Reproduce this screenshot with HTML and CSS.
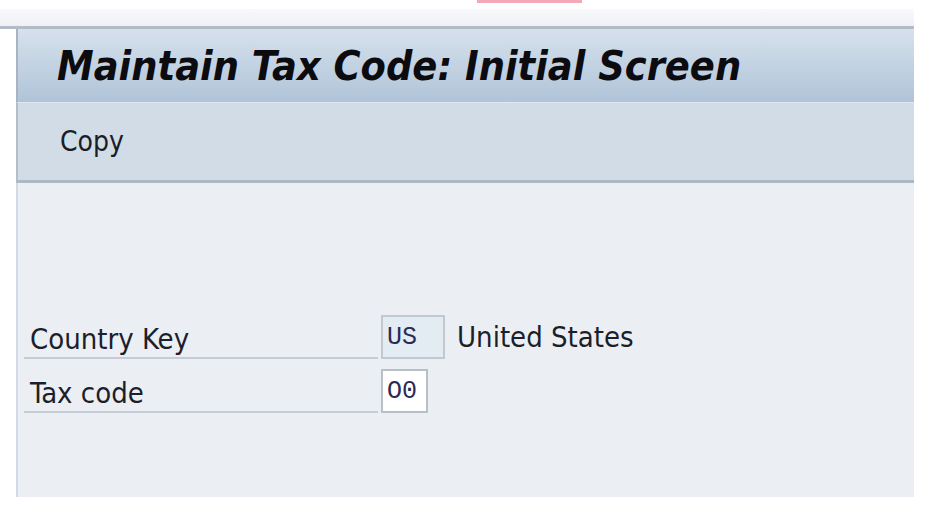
FILE: index.html
```html
<!DOCTYPE html>
<html>
<head>
<meta charset="utf-8">
<link rel="stylesheet" href="styles.css">
</head>
<body>
<div class="mark"></div>
<div class="strip"></div>
<div class="panel">
  <div class="titlebar"><h1 class="title">Maintain Tax Code: Initial Screen</h1></div>
  <div class="toolbar"><span class="tool">Copy</span></div>
  <div class="content">
    <div class="row">
      <div class="label">Country Key</div>
      <div class="field readonly">US</div>
      <div class="desc">United States</div>
    </div>
    <div class="row">
      <div class="label">Tax code</div>
      <div class="field input">O0</div>
    </div>
  </div>
</div>
</body>
</html>
```
FILE: styles.css
```css
html, body {
  margin: 0;
  padding: 0;
  background: #ffffff;
}
body {
  width: 930px;
  height: 512px;
  overflow: hidden;
  font-family: "DejaVu Sans Condensed", "DejaVu Sans", sans-serif;
  color: #1c1f2b;
}
.mark {
  margin-left: 477px;
  width: 105px;
  height: 3px;
  background: #f3a9b8;
}
.strip {
  margin-top: 6px;
  width: 914px;
  height: 17px;
  background: linear-gradient(#f8f9fc, #eef0f5);
  border-bottom: 3px solid #b3bac8;
}
.panel {
  margin-left: 16px;
  width: 898px;
}
.titlebar {
  height: 73px;
  box-sizing: border-box;
  border-left: 2px solid #a9b3c1;
  background: linear-gradient(#d6e1ec, #b0c4d9);
  display: flex;
  align-items: center;
  padding-left: 39px;
}
.title {
  margin: 0;
  font-size: 41px;
  font-weight: bold;
  font-style: italic;
  color: #0c0c10;
  letter-spacing: 0;
}
.toolbar {
  height: 81px;
  box-sizing: border-box;
  border-left: 2px solid #b4bdc9;
  border-top: 1px solid #e0e7ef;
  border-bottom: 3px solid #aeb8c5;
  background: #d1dce6;
  display: flex;
  align-items: center;
  padding-left: 42px;
}
.tool {
  font-size: 28px;
  color: #1a1d28;
}
.content {
  height: 314px;
  box-sizing: border-box;
  border-left: 2px solid #d2dae7;
  background: #ebeff3;
  padding-top: 132px;
  padding-left: 6px;
}
.row {
  display: flex;
  align-items: stretch;
  height: 44px;
  margin-bottom: 10px;
}
.label {
  width: 354px;
  box-sizing: border-box;
  border-bottom: 2px solid #c5ccd6;
  padding-left: 6px;
  font-size: 29px;
  display: flex;
  align-items: flex-end;
  padding-bottom: 1px;
}
.field {
  margin-left: 3px;
  box-sizing: border-box;
  font-family: "Liberation Mono", monospace;
  font-size: 25px;
  display: flex;
  align-items: center;
  padding-left: 4px;
  color: #2a2a55;
}
.readonly {
  width: 64px;
  border: 2px solid #c2c8cf;
  background: #e3ebf3;
}
.input {
  width: 47px;
  border: 2px solid #b9bfc6;
  background: #ffffff;
}
.desc {
  margin-left: 12px;
  font-size: 29px;
  display: flex;
  align-items: center;
}
```
